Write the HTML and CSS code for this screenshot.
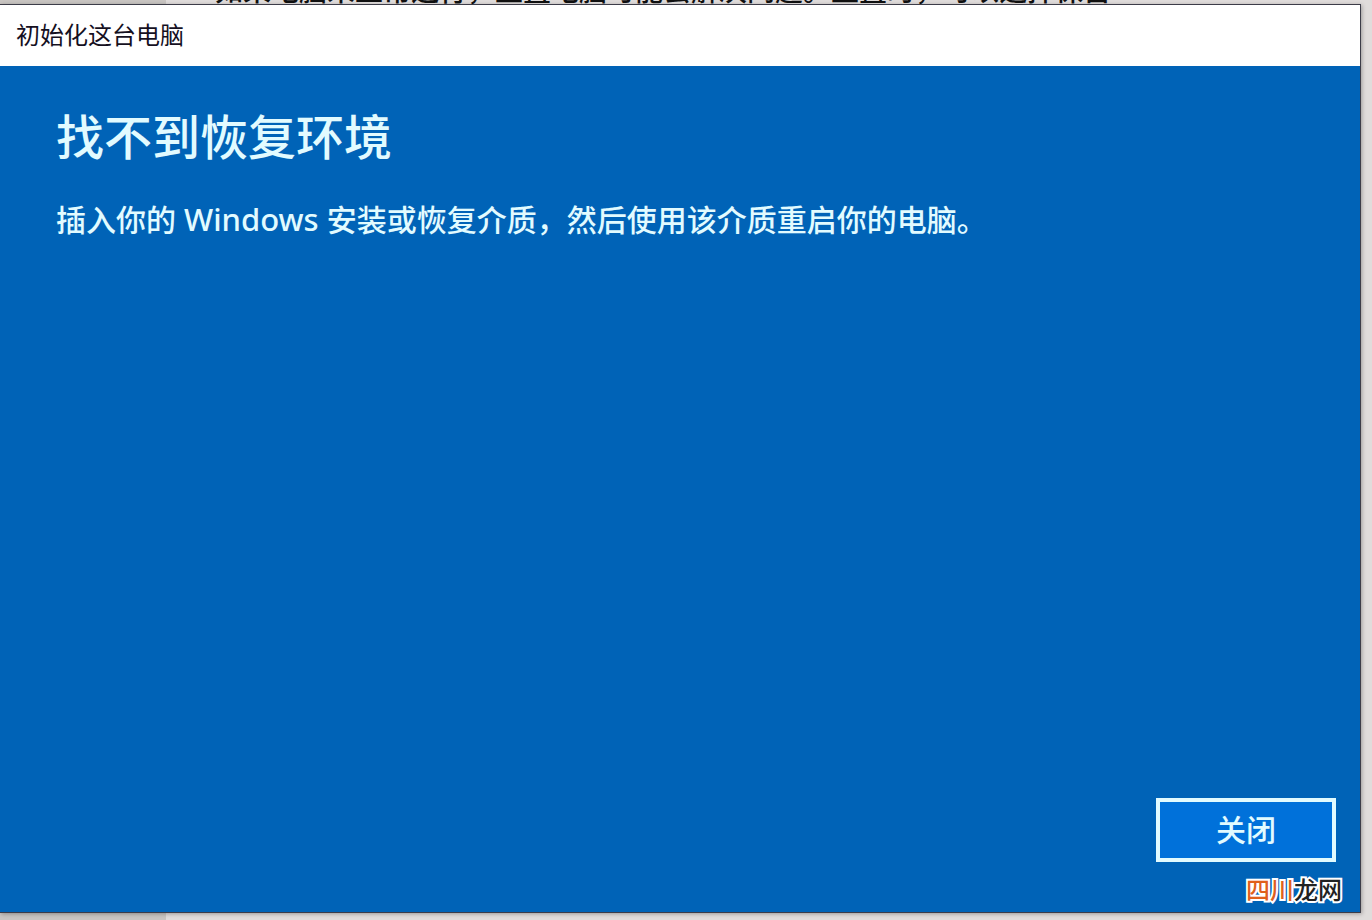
FILE: index.html
```html
<!DOCTYPE html>
<html lang="zh-CN">

<head>
    <meta charset="UTF-8">
    <meta name="viewport" content="width=device-width, initial-scale=1.0">
    <title>初始化这台电脑</title>
    <link rel="stylesheet" href="styles.css">
</head>

<body>
    <!-- Settings page behind the dialog -->
    <div class="backdrop">
        <p class="backdrop-text">如果电脑未正常运行，重置电脑可能会解决问题。重置时，可以选择保留</p>
    </div>

    <main class="dialog">
        <header class="titlebar">初始化这台电脑</header>
        <section class="content">
            <h1>找不到恢复环境</h1>
            <p class="message">插入你的<span class="latin"> Windows </span>安装或恢复介质，然后使用该介质重启你的电脑。</p>
            <div class="actions">
                <button type="button" class="close-button">关闭</button>
            </div>
        </section>
    </main>

    <div class="watermark"><span>四川</span>龙网</div>
</body>

</html>
```

FILE: styles.css
```css
* {
    box-sizing: border-box;
}

body {
    margin: 0;
    min-height: 100vh;
    display: flex;
    flex-direction: column;
    position: relative;
    font-family: "Noto Sans", "Noto Sans CJK SC", sans-serif;
    background: linear-gradient(to right, #c9c5c2 166px, #e0dcdb 166px);
}

.backdrop {
    height: 4px;
    display: flex;
    align-items: flex-end;
    overflow: hidden;
    padding-left: 215px;
}

.backdrop-text {
    margin: 0;
    font-size: 28px;
    line-height: 28px;
    font-weight: 500;
    white-space: nowrap;
    color: #111;
}

.dialog {
    flex: 1;
    display: flex;
    flex-direction: column;
    margin: 0 11px 7px 0;
    border: 1px solid #3c3c48;
    border-left: none;
    background-color: #0063b7;
    box-shadow: 1px 1px 4px rgba(0, 0, 0, 0.3);
}

.titlebar {
    padding: 14px 16px 15px;
    font-size: 24px;
    line-height: 32px;
    color: #15101f;
    background-color: #fff;
}

.content {
    flex: 1;
    display: flex;
    flex-direction: column;
    padding: 39px 24px 50px 56px;
    color: #e2fbff;
}

h1 {
    margin: 0;
    font-size: 48px;
    line-height: 64px;
    font-weight: 500;
}

.message {
    margin: 30px 0;
    font-size: 30px;
    line-height: 40px;
    font-weight: 500;
}

.latin {
    font-size: 31px;
}

.actions {
    display: flex;
    justify-content: flex-end;
    margin-top: auto;
}

.close-button {
    width: 180px;
    height: 64px;
    padding: 0;
    border: 4px solid #e2fbff;
    font-family: inherit;
    font-size: 30px;
    line-height: 40px;
    font-weight: 500;
    color: #e2fbff;
    background-color: #0071da;
    cursor: pointer;
}

.close-button:hover {
    background-color: #1a80e0;
}

.watermark {
    position: absolute;
    right: 30px;
    bottom: 14px;
    font-size: 24px;
    line-height: 32px;
    font-weight: 500;
    color: #222;
    -webkit-text-stroke: 4px #fff;
    paint-order: stroke fill;
}

.watermark span {
    color: #e0601c;
}
```
